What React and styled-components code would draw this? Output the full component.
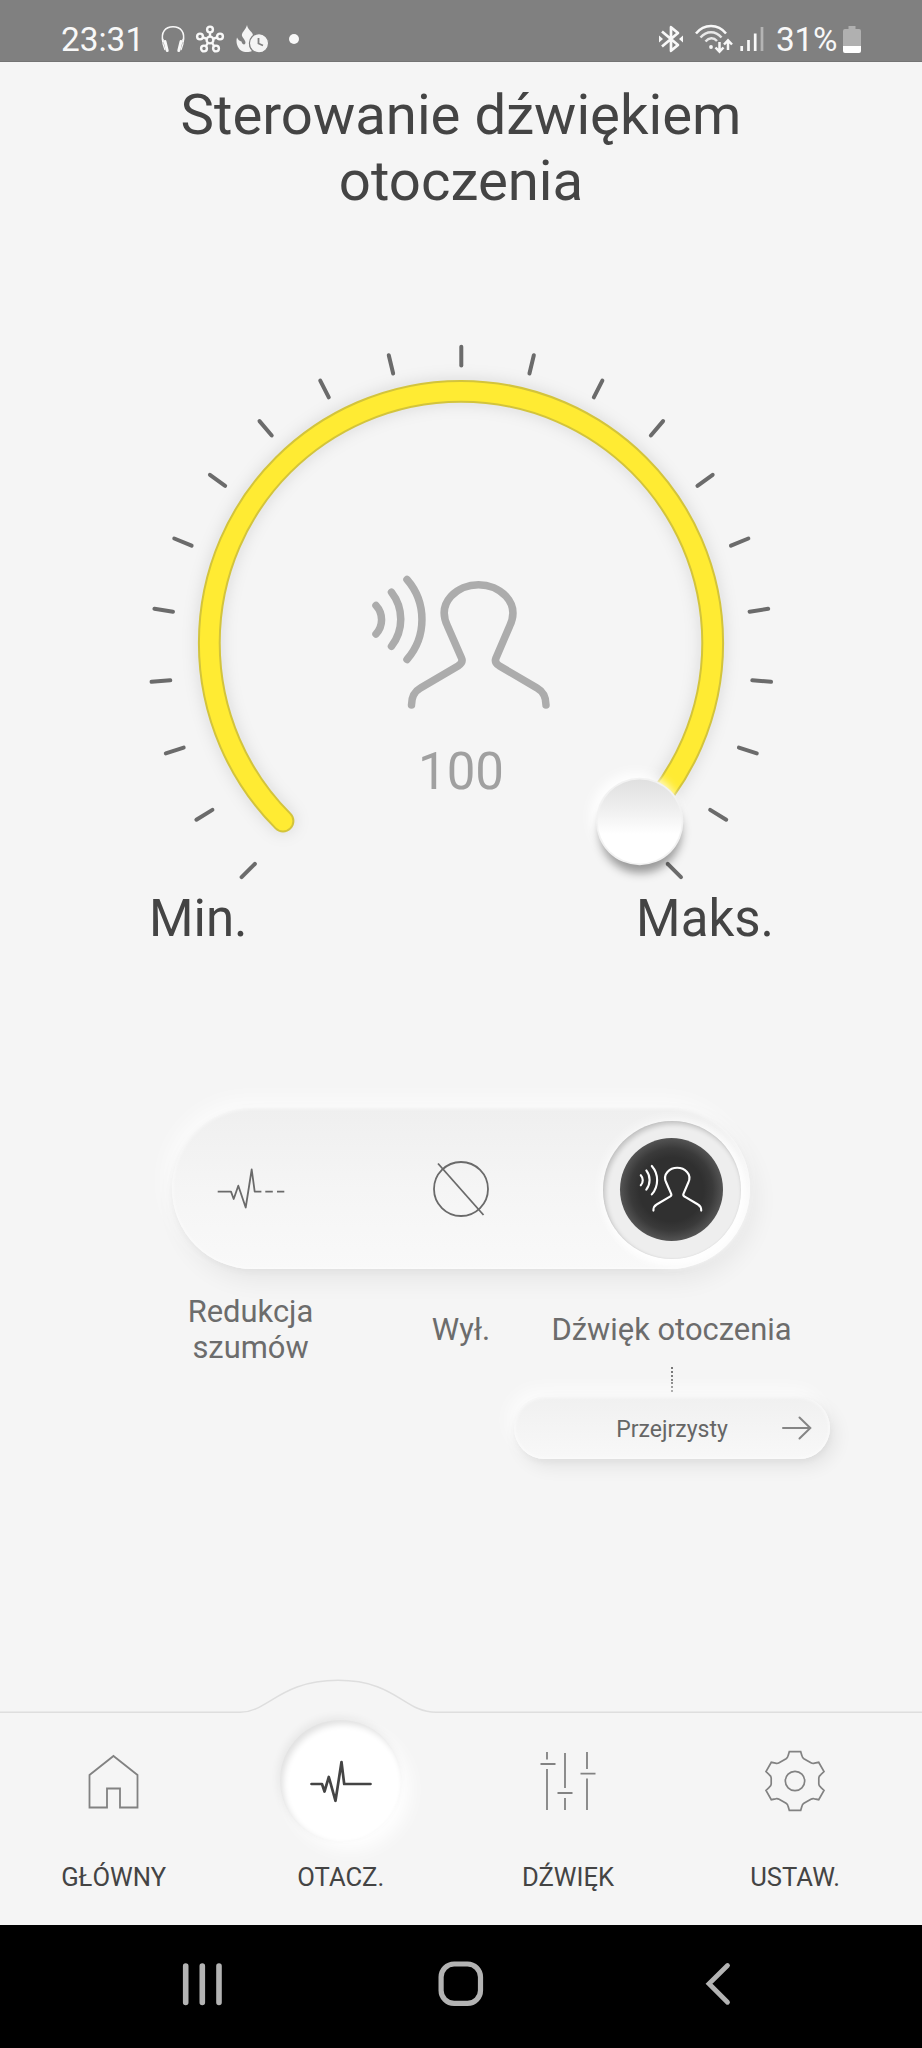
import React from "react";
import styled, { createGlobalStyle } from "styled-components";

const GlobalStyle = createGlobalStyle`
  body {
    margin: 0;
    background: #f5f5f5;
    font-family: Roboto, "Noto Sans", sans-serif;
  }
  svg {
    display: block;
    flex: none;
    overflow: visible;
  }
`;

const Screen = styled.div`
  width: 922px;
  height: 2048px;
  display: flex;
  flex-direction: column;
  background: #f5f5f5;
  color: #444;
  overflow: hidden;
`;

const StatusBar = styled.header`
  box-sizing: border-box;
  height: 62px;
  flex: none;
  padding: 17px 61px 0 61px;
  display: flex;
  justify-content: space-between;
  background: #808080;
  border-bottom: 1px solid #747474;
  color: #f8f8f8;
`;

const StatusGroup = styled.div`
  display: flex;
  height: 44px;
  align-items: center;
`;

const StatusText = styled.span`
  font-size: 33.4px;
  line-height: 44px;
  width: ${(props) => props.$width}px;
  letter-spacing: ${(props) => props.$spacing || 0}px;
  white-space: nowrap;
  padding-top: 2px;
`;

const StatusIcons = styled.div`
  display: flex;
  align-items: center;
  gap: ${(props) => props.$gap}px;
  margin-right: ${(props) => props.$after || 0}px;
`;

const Dot = styled.i`
  width: 10px;
  height: 10px;
  margin-left: 10px;
  border-radius: 50%;
  background: #f8f8f8;
`;

const Title = styled.h1`
  margin: 20px 0 0;
  font-size: 56.3px;
  font-weight: 400;
  line-height: 66px;
  text-align: center;
`;

const DialBox = styled.section`
  position: relative;
  width: 640px;
  height: 558px;
  margin: 116px auto 0;
`;

const DialCenter = styled.div`
  position: absolute;
  top: 244px;
  left: 0;
  right: 0;
  display: flex;
  flex-direction: column;
  align-items: center;
`;

const DialValue = styled.div`
  margin-top: 32px;
  font-size: 51px;
  line-height: 60px;
  color: #a0a0a0;
`;

const DialLabels = styled.div`
  display: flex;
  justify-content: space-between;
  padding: 1px 148px 0 149px;
  font-size: 51px;
  line-height: 60px;
`;

const Toggle = styled.div`
  display: flex;
  justify-content: space-between;
  flex: none;
  width: 578px;
  height: 161px;
  margin: 159px auto 0;
  border-radius: 81px;
  background: linear-gradient(#efefef, #f5f5f5 50%, #f9f9f9);
  box-shadow: 6px 12px 24px rgba(0, 0, 0, 0.06), 0 3px 6px rgba(0, 0, 0, 0.04),
    -6px -8px 22px rgba(255, 255, 255, 0.7),
    inset 0 0 4px rgba(255, 255, 255, 0.8);
`;

const ToggleOption = styled.div`
  width: 158px;
  display: flex;
  align-items: center;
  justify-content: center;
`;

const ActiveRing = styled.div`
  width: 138px;
  height: 138px;
  margin: 2px 0 0 1px;
  border-radius: 50%;
  display: flex;
  align-items: center;
  justify-content: center;
  background: #eeeeee;
  box-shadow: inset 2px 3px 5px rgba(0, 0, 0, 0.18),
    inset 0 0 2px rgba(0, 0, 0, 0.08), 4px 5px 8px 3px rgba(255, 255, 255, 0.85),
    0 0 8px 5px rgba(255, 255, 255, 0.4);
`;

const ActiveDisc = styled.div`
  width: 103px;
  height: 103px;
  border-radius: 50%;
  display: flex;
  align-items: center;
  justify-content: center;
  background: radial-gradient(circle closest-side, #303030 62%, #3a3a3a 80%, #545454);

  svg {
    margin: -2px 2px 0 0;
  }
`;

const ModeLabels = styled.div`
  display: grid;
  grid-template-columns: repeat(3, 210.5px);
  justify-content: center;
  align-items: center;
  height: 72px;
  margin-top: 25px;
`;

const ModeLabel = styled.div`
  display: flex;
  justify-content: center;
  text-align: center;
  font-size: 30.9px;
  line-height: 36px;
  color: #6c6c6c;
  white-space: pre;
`;

const SubMode = styled.div`
  display: flex;
  flex-direction: column;
  align-items: center;
  width: 316px;
  margin: 1px 0 0 514px;
`;

const Connector = styled.div`
  width: 2px;
  height: 25px;
  background: repeating-linear-gradient(#777 0 2px, transparent 2px 3.85px);
`;

const Pill = styled.div`
  box-sizing: border-box;
  display: grid;
  grid-template-columns: 30px 1fr 30px;
  align-items: center;
  width: 316px;
  height: 62px;
  margin-top: 5px;
  padding: 0 18px;
  border-radius: 31px;
  background: linear-gradient(#f0f0f0, #f8f8f8);
  box-shadow: 6px 8px 18px rgba(0, 0, 0, 0.07), 1px 3px 6px rgba(0, 0, 0, 0.04),
    -6px -8px 18px rgba(255, 255, 255, 0.7),
    inset 0 0 4px rgba(255, 255, 255, 0.9);
`;

const PillText = styled.span`
  grid-column: 2;
  padding-top: 2px;
  text-align: center;
  font-size: 23px;
  color: #666;
`;

const TabBar = styled.nav`
  position: relative;
  box-sizing: border-box;
  flex: none;
  height: 250px;
  margin-top: auto;
  padding: 45px 13px 0 0;
  display: grid;
  grid-template-columns: repeat(4, 227.2px);
`;

const TabOutline = styled.svg`
  position: absolute;
  top: 0;
  left: 0;
`;

const Tab = styled.div`
  display: flex;
  flex-direction: column;
  align-items: center;
  font-size: 25.6px;
  line-height: 30px;
`;

const TabIcon = styled.div`
  display: flex;
  align-items: center;
  justify-content: center;
  width: 121px;
  height: 121px;
  margin-bottom: 21px;
  border-radius: 50%;
  background: ${(props) => (props.$active ? "#fff" : "none")};
  box-shadow: ${(props) =>
    props.$active
      ? "inset 3px 4px 6px rgba(0,0,0,.12), -2px -3px 9px rgba(0,0,0,.06), 9px 9px 18px rgba(255,255,255,.95)"
      : "none"};
`;

const SystemBar = styled.footer`
  box-sizing: border-box;
  display: grid;
  grid-template-columns: 256px 1fr 25px;
  flex: none;
  height: 123px;
  padding: 36px 191px 0 182px;
  background: #000;
`;

const HeadphonesIcon = () => (
  <svg width="24" height="28" viewBox="0 0 24 28" fill="none" stroke="#f8f8f8">
    <path d="M2 17C-.5 7 4.500 1.800 12 1.800S24.500 7 22 17" strokeWidth="1.600" />
    <path d="M4 16.500l2.200 9M20 16.500l-2.200 9" strokeWidth="3" strokeLinecap="round" />
    <path d="M2 14v5l2 6M22 14v5l-2 6" strokeWidth="1.200" />
  </svg>
);

const HubIcon = () => (
  <svg width="28" height="28" viewBox="0 0 28 28" fill="none" stroke="#f8f8f8" strokeWidth="2.400">
    <circle cx="14" cy="15" r="3.400" />
    <circle cx="14" cy="4.500" r="2.900" />
    <circle cx="4" cy="11.500" r="2.900" />
    <circle cx="24" cy="11.500" r="2.900" />
    <circle cx="8" cy="23.500" r="2.900" />
    <circle cx="20" cy="23.500" r="2.900" />
    <path d="M14 7.500v4M7 12.500l3.500 1.200M21 12.500l-3.500 1.200M10 21l1.800-3M18 21l-1.800-3" />
  </svg>
);

const FlameClockIcon = () => (
  <svg width="32" height="28" viewBox="0 0 32 28">
    <path
      d="M11 0C12 6 17 6 17 11c0 2-1 3-2 4-3 3-2 8 1 11-3 1.600-8 1.500-11-.5C1.500 23-.5 17 1 12.500c1 2.500 2.500 3.500 4.500 4C6 19 8 20 9 19c1.500-2-.5-4-2.500-7C4 8 10 5 11 0z"
      fill="#f4f4f4"
    />
    <circle cx="23" cy="18.300" r="9.600" fill="#f4f4f4" stroke="#808080" strokeWidth="1.200" />
    <path d="M22.500 13v5.500l4.500 2" fill="none" stroke="#808080" strokeWidth="1.800" />
  </svg>
);

const BluetoothIcon = () => (
  <svg width="24" height="28" viewBox="0 0 24 28" fill="none" stroke="#f8f8f8" strokeWidth="2.700">
    <path d="M3 6.500l16 13.500-7 5.800V2.200L19 8 3 21.500" strokeLinejoin="round" />
    <path d="M0 10.500v7l4-3.500zM24 10.500v7L20 14z" fill="#f8f8f8" stroke="none" />
  </svg>
);

const WifiIcon = () => (
  <svg width="33" height="30" viewBox="0 0 33 30" fill="none" stroke="#f8f8f8" strokeWidth="2.500">
    <path d="M1 9.500C9-.5 23-.5 31 9.500" />
    <path d="M5.500 13.500c6-7 15-7 21 0M10.500 17.500c3.500-4 8-4.200 11.500-.5" stroke="#e8e8e8" />
    <circle cx="16" cy="23" r="1.900" fill="#f8f8f8" stroke="none" />
    <path d="M24.500 18v9.500M20.500 23.500l4 4.200 4-4.200M33 26v-9.500M29 20.500l4-4.200 4 4.200" />
  </svg>
);

const SignalIcon = () => (
  <svg width="24" height="26" viewBox="0 0 24 26" strokeWidth="2.700" stroke="#f8f8f8">
    <path d="M1.700 20v5M8.500 14v11M15.200 7.500V25" />
    <path d="M22 1v24" stroke="#b4b4b4" />
  </svg>
);

const BatteryIcon = () => (
  <svg width="18" height="27" viewBox="0 0 18 27">
    <path d="M5.500 0h7v3H16a2 2 0 012 2v15H0V5a2 2 0 012-2h3.500z" fill="#b0b0b0" />
    <path d="M0 20h18v5a2 2 0 01-2 2H2a2 2 0 01-2-2z" fill="#fff" />
  </svg>
);

const PersonIcon = ({ width, color, stroke }) => (
  <svg
    width={width}
    height={(width * 136) / 180}
    viewBox="0 0 180 136"
    fill="none"
    stroke={color}
    strokeWidth={stroke}
    strokeLinecap="round"
    strokeLinejoin="round"
  >
    <path d="M40.500 131q0-12 9-17L87 92q5.500-3.500 3.500-8L76.500 52C65 28 87 10.700 107.500 10.700S150 28 138.700 52L125 84q-2 5 3.500 8l37.500 22q9 5 9 17" />
    <path d="M36 5.500a61 61 0 010 80M20.500 18.200a44 44 0 010 54M5 31.500a21 21 0 010 28.500" />
  </svg>
);

const NoiseIcon = () => (
  <svg width="70" height="44" viewBox="0 0 70 44" fill="none" stroke="#6a6a6a" strokeWidth="1.800" strokeLinejoin="round">
    <path d="M1.700 24.600H15l2.700 7.400 4.600-13.300 7.400 21.800L35.700 2.500l3 22.100h6.700M49.300 24.600h7.500M61 24.600h7.300" />
  </svg>
);

const OffIcon = () => (
  <svg width="56" height="56" viewBox="0 0 56 56" fill="none" stroke="#6a6a6a" strokeWidth="1.800">
    <circle cx="28" cy="28" r="27" />
    <path d="M5 2.500L50.500 54" />
  </svg>
);

const ArrowIcon = () => (
  <svg width="30" height="24" viewBox="0 0 30 24" fill="none" stroke="#858585" strokeWidth="2" strokeLinecap="round">
    <path d="M1 12h27M17.500 1.500L28.300 12 17.500 22.500" />
  </svg>
);

const HomeIcon = () => (
  <svg width="50" height="54" viewBox="0 0 50 54" fill="none" stroke="#828282" strokeWidth="1.800">
    <path d="M24.500 2L48.500 21v32.500H31v-19H18v19H.5V21z" />
  </svg>
);

const PulseIcon = () => (
  <svg width="62" height="42" viewBox="0 0 62 42" fill="none" stroke="#444" strokeWidth="2.700" strokeLinecap="round" strokeLinejoin="round">
    <path d="M1.500 24H12l2.500 7.500L18.800 17l6.700 23.800L31.500 2l2.700 22H60.500" />
  </svg>
);

const SlidersIcon = () => (
  <svg width="56" height="58" viewBox="0 0 56 58" fill="none" stroke="#828282" strokeWidth="1.800">
    <path d="M7 0v7.500M7 17v41M.500 12h15M25 1v35M25 46v12M17.500 41h15M47 0v17M47 26.500V58M40.500 21.700h15" />
  </svg>
);

const GearIcon = () => (
  <svg width="60" height="60" viewBox="0 0 60 60" fill="none" stroke="#828282" strokeWidth="1.700">
    <circle cx="30" cy="30" r="9.700" />
    <path d="M24.300.7h11.400l1.200 4q.4 2 2 3l7 4q1.700 1 3.500.5l4.300-.9 5.300 9.400-3.200 3q-2 1.500-2 3.300v6q0 1.800 2 3.300l3.200 3-5.300 9.400-4.300-.9q-1.800-.5-3.500.5l-7 4q-1.600 1-2 3l-1.200 4H24.300l-1.200-4q-.4-2-2-3l-7-4q-1.700-1-3.500-.5l-4.300.9L1 39.300l3.200-3q2-1.500 2-3.300v-6q0-1.800-2-3.300l-3.200-3 5.300-9.400 4.300.9q1.800.5 3.500-.5l7-4q1.600-1 2-3z" />
  </svg>
);

const ARC = "M142 491A251.700 251.700 0 1 1 498 491";
const ticks = Array.from({ length: 21 }, (_, i) => (i - 10) * 13.5);

const Dial = () => (
  <DialBox>
    <svg width="640" height="558" viewBox="0 0 640 558" fill="none">
      <defs>
        <filter id="soft" x="-20%" y="-20%" width="140%" height="140%">
          <feGaussianBlur stdDeviation="8" />
        </filter>
        <filter id="glow" x="-40%" y="-40%" width="180%" height="180%">
          <feGaussianBlur stdDeviation="5" />
        </filter>
        <linearGradient id="knob" x1="0" y1="0" x2="0" y2="1">
          <stop offset="0" stopColor="#e0e0e0" />
          <stop offset="0.350" stopColor="#efefef" />
          <stop offset="0.650" stopColor="#fff" />
        </linearGradient>
      </defs>
      <path d={ARC} stroke="#000" strokeOpacity="0.110" strokeWidth="24" strokeLinecap="round" filter="url(#soft)" />
      <path d={ARC} stroke="#d3c43b" strokeWidth="22.800" strokeLinecap="round" />
      <path d={ARC} stroke="#ffeb33" strokeWidth="18.800" strokeLinecap="round" />
      {ticks.map((angle) => (
        <path
          key={angle}
          d="M320.300 16.700v18.800"
          transform={`rotate(${angle} 320.300 327.400)`}
          stroke="#6b6b6b"
          strokeWidth="4"
          strokeLinecap="round"
        />
      ))}
      <circle cx="494" cy="487" r="45" fill="#fff" fillOpacity="0.850" filter="url(#glow)" />
      <circle cx="499.500" cy="502" r="41" fill="#000" fillOpacity="0.380" filter="url(#glow)" />
      <circle cx="498.700" cy="491.500" r="43.700" fill="#f2f2f2" />
      <circle cx="498.700" cy="491.500" r="42" fill="url(#knob)" />
    </svg>
    <DialCenter>
      <PersonIcon width={180} color="#acacac" stroke={7.5} />
      <DialValue>100</DialValue>
    </DialCenter>
  </DialBox>
);

const tabs = [
  { label: "GŁÓWNY", icon: <HomeIcon /> },
  { label: "OTACZ.", icon: <PulseIcon />, active: true },
  { label: "DŹWIĘK", icon: <SlidersIcon /> },
  { label: "USTAW.", icon: <GearIcon /> },
];

function App() {
  return (
    <Screen>
      <GlobalStyle />
      <StatusBar>
        <StatusGroup>
          <StatusText $width={99.5}>23:31</StatusText>
          <StatusIcons $gap={11.5}>
            <HeadphonesIcon />
            <HubIcon />
            <FlameClockIcon />
            <Dot />
          </StatusIcons>
        </StatusGroup>
        <StatusGroup>
          <StatusIcons $gap={12} $after={12}>
            <BluetoothIcon />
            <WifiIcon />
            <SignalIcon />
          </StatusIcons>
          <StatusText $width={67} $spacing={-0.3}>
            31%
          </StatusText>
          <BatteryIcon />
        </StatusGroup>
      </StatusBar>

      <Title>
        Sterowanie dźwiękiem
        <br />
        otoczenia
      </Title>

      <Dial />
      <DialLabels>
        <span>Min.</span>
        <span>Maks.</span>
      </DialLabels>

      <Toggle>
        <ToggleOption>
          <NoiseIcon />
        </ToggleOption>
        <ToggleOption>
          <OffIcon />
        </ToggleOption>
        <ToggleOption>
          <ActiveRing>
            <ActiveDisc>
              <PersonIcon width={64} color="#fff" stroke={6} />
            </ActiveDisc>
          </ActiveRing>
        </ToggleOption>
      </Toggle>
      <ModeLabels>
        <ModeLabel>{"Redukcja\nszumów"}</ModeLabel>
        <ModeLabel>Wył.</ModeLabel>
        <ModeLabel>Dźwięk otoczenia</ModeLabel>
      </ModeLabels>
      <SubMode>
        <Connector />
        <Pill>
          <PillText>Przejrzysty</PillText>
          <ArrowIcon />
        </Pill>
      </SubMode>

      <TabBar>
        <TabOutline width="922" height="45" viewBox="0 0 922 45" fill="none" stroke="#dedede" strokeWidth="1.500">
          <path d="M0 37.300H240C268 37.300 280 5.300 338 5.300S404 37.300 436 37.300H922" />
        </TabOutline>
        {tabs.map((tab) => (
          <Tab key={tab.label}>
            <TabIcon $active={tab.active}>{tab.icon}</TabIcon>
            {tab.label}
          </Tab>
        ))}
      </TabBar>

      <SystemBar>
        <svg width="40" height="46" viewBox="0 0 40 46" stroke="#b3b3b3" strokeWidth="5.600" strokeLinecap="round">
          <path d="M3.700 5v36.500M20.300 5v36.500M37 5v36.500" />
        </svg>
        <svg width="46" height="46" viewBox="0 0 46 46" fill="none" stroke="#b3b3b3" strokeWidth="5.200">
          <rect x="3.100" y="3" width="39.400" height="39.400" rx="13" />
        </svg>
        <svg width="25" height="46" viewBox="0 0 25 46" fill="none" stroke="#b3b3b3" strokeWidth="4.800" strokeLinecap="round">
          <path d="M21.500 4.500L3 22.800l18.500 18.500" />
        </svg>
      </SystemBar>
    </Screen>
  );
}

export default App;
